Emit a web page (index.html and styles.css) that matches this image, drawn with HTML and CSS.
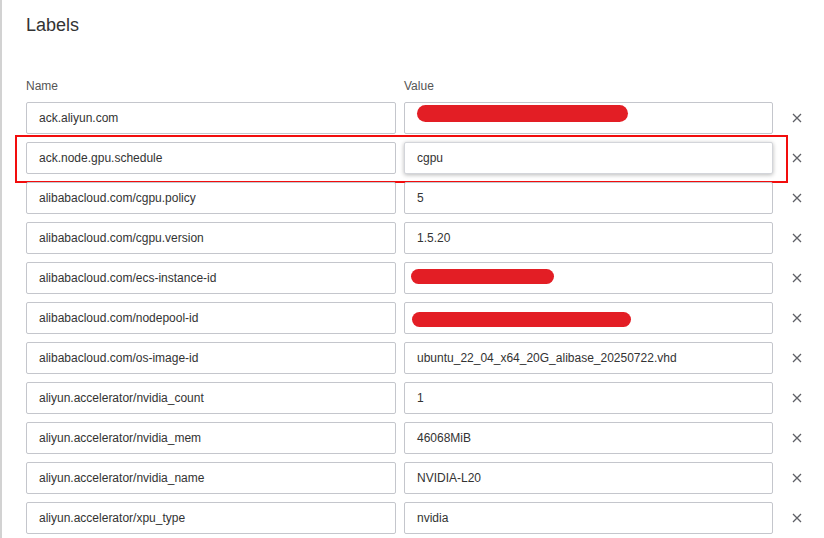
FILE: index.html
```html
<!DOCTYPE html>
<html>
<head>
<meta charset="utf-8">
<link rel="stylesheet" href="styles.css">
</head>
<body>
<div class="panel">
  <h1 class="title">Labels</h1>
  <div class="head">
    <div class="col-name">Name</div>
    <div class="col-value">Value</div>
  </div>
  <div class="rows">
    <div class="row">
      <div class="field name">ack.aliyun.com</div>
      <div class="field value"><span class="redact r1"></span></div>
      <div class="del"><svg width="10" height="10" viewBox="0 0 10 10"><path d="M1 1L9 9M9 1L1 9"/></svg></div>
    </div>
    <div class="row">
      <div class="field name">ack.node.gpu.schedule</div>
      <div class="field value focus">cgpu</div>
      <div class="del"><svg width="10" height="10" viewBox="0 0 10 10"><path d="M1 1L9 9M9 1L1 9"/></svg></div>
      <div class="highlight"></div>
    </div>
    <div class="row">
      <div class="field name">alibabacloud.com/cgpu.policy</div>
      <div class="field value">5</div>
      <div class="del"><svg width="10" height="10" viewBox="0 0 10 10"><path d="M1 1L9 9M9 1L1 9"/></svg></div>
    </div>
    <div class="row">
      <div class="field name">alibabacloud.com/cgpu.version</div>
      <div class="field value">1.5.20</div>
      <div class="del"><svg width="10" height="10" viewBox="0 0 10 10"><path d="M1 1L9 9M9 1L1 9"/></svg></div>
    </div>
    <div class="row">
      <div class="field name">alibabacloud.com/ecs-instance-id</div>
      <div class="field value"><span class="redact r2"></span></div>
      <div class="del"><svg width="10" height="10" viewBox="0 0 10 10"><path d="M1 1L9 9M9 1L1 9"/></svg></div>
    </div>
    <div class="row">
      <div class="field name">alibabacloud.com/nodepool-id</div>
      <div class="field value"><span class="redact r3"></span></div>
      <div class="del"><svg width="10" height="10" viewBox="0 0 10 10"><path d="M1 1L9 9M9 1L1 9"/></svg></div>
    </div>
    <div class="row">
      <div class="field name">alibabacloud.com/os-image-id</div>
      <div class="field value">ubuntu_22_04_x64_20G_alibase_20250722.vhd</div>
      <div class="del"><svg width="10" height="10" viewBox="0 0 10 10"><path d="M1 1L9 9M9 1L1 9"/></svg></div>
    </div>
    <div class="row">
      <div class="field name">aliyun.accelerator/nvidia_count</div>
      <div class="field value">1</div>
      <div class="del"><svg width="10" height="10" viewBox="0 0 10 10"><path d="M1 1L9 9M9 1L1 9"/></svg></div>
    </div>
    <div class="row">
      <div class="field name">aliyun.accelerator/nvidia_mem</div>
      <div class="field value">46068MiB</div>
      <div class="del"><svg width="10" height="10" viewBox="0 0 10 10"><path d="M1 1L9 9M9 1L1 9"/></svg></div>
    </div>
    <div class="row">
      <div class="field name">aliyun.accelerator/nvidia_name</div>
      <div class="field value">NVIDIA-L20</div>
      <div class="del"><svg width="10" height="10" viewBox="0 0 10 10"><path d="M1 1L9 9M9 1L1 9"/></svg></div>
    </div>
    <div class="row">
      <div class="field name">aliyun.accelerator/xpu_type</div>
      <div class="field value">nvidia</div>
      <div class="del"><svg width="10" height="10" viewBox="0 0 10 10"><path d="M1 1L9 9M9 1L1 9"/></svg></div>
    </div>
  </div>
</div>
</body>
</html>
```

FILE: styles.css
```css
html, body {
  margin: 0;
  padding: 0;
  background: #ffffff;
}
body {
  font-family: "Liberation Sans", Arial, sans-serif;
  color: #333333;
  border-left: 2px solid #d2d2d2;
  min-height: 538px;
  box-sizing: border-box;
  overflow: hidden;
}
.panel {
  padding: 14px 0 0 24px;
}
.title {
  margin: 0;
  font-size: 18px;
  line-height: 22px;
  font-weight: normal;
  color: #333333;
}
.head {
  display: flex;
  margin-top: 42px;
  font-size: 12px;
  line-height: 16px;
  color: #555555;
}
.col-name {
  width: 378px;
}
.rows {
  margin-top: 8px;
  display: flex;
  flex-direction: column;
  gap: 8px;
}
.row {
  position: relative;
  display: flex;
  align-items: center;
}
.field {
  position: relative;
  box-sizing: border-box;
  height: 32px;
  border: 1px solid #c4c6cc;
  border-radius: 2px;
  padding: 0 12px;
  font-size: 12px;
  line-height: 30px;
  color: #333333;
  white-space: nowrap;
  background: #ffffff;
}
.name {
  width: 370px;
  margin-right: 8px;
}
.value {
  width: 369px;
}
.focus {
  border-color: #d3d5da;
  box-shadow: 0 1px 4px rgba(0, 0, 0, 0.28);
}
.del {
  width: 48px;
  display: flex;
  justify-content: center;
  align-items: center;
  height: 32px;
}
.del svg path {
  stroke: #5f6066;
  stroke-width: 1.3;
  fill: none;
}
.highlight {
  position: absolute;
  left: -11px;
  top: -7px;
  width: 773px;
  height: 48px;
  box-sizing: border-box;
  border: 2px solid #f20d0d;
  pointer-events: none;
}
.redact {
  position: absolute;
  background: #e31e25;
  border-radius: 9px;
}
.r1 {
  left: 12px;
  top: 2px;
  width: 211px;
  height: 17px;
}
.r2 {
  left: 6px;
  top: 6px;
  width: 143px;
  height: 15px;
}
.r3 {
  left: 7px;
  top: 9px;
  width: 219px;
  height: 15px;
}
```
